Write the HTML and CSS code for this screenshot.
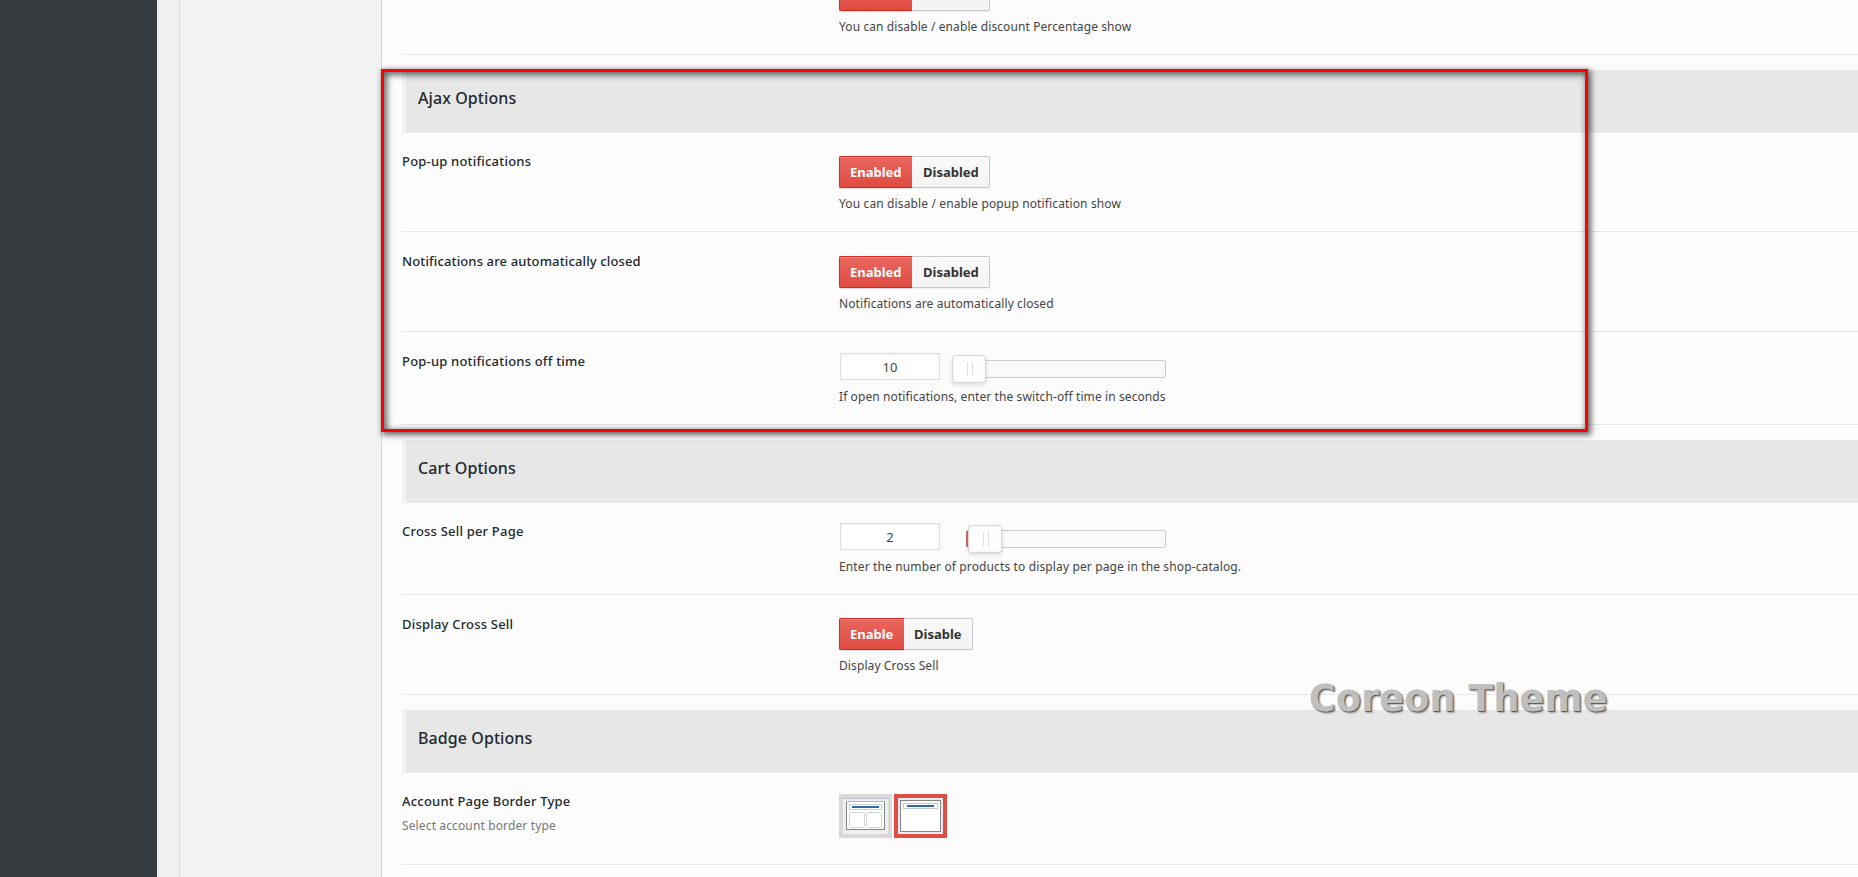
FILE: index.html
```
<!DOCTYPE html>
<html lang="en">
<head>
<meta charset="utf-8">
<title>Theme Options</title>
<link rel="stylesheet" href="styles.css">
</head>
<body>
<div class="page">
  <div class="admin-menu"></div>
  <div class="gutter"></div>
  <div class="options-menu"></div>
  <main class="content">
    <section class="row row-clipped">
      <div class="label-col"></div>
      <div class="field">
        <div class="switch"><span class="on"></span><span class="off"></span></div>
        <p class="desc">You can disable / enable discount Percentage show</p>
      </div>
    </section>

    <h3 class="section">Ajax Options</h3>
    <section class="row first h99">
      <div class="label-col"><div class="label">Pop-up notifications</div></div>
      <div class="field">
        <div class="switch"><span class="on">Enabled</span><span class="off">Disabled</span></div>
        <p class="desc loose">You can disable / enable popup notification show</p>
      </div>
    </section>
    <section class="row h100">
      <div class="label-col"><div class="label tight">Notifications are automatically closed</div></div>
      <div class="field">
        <div class="switch"><span class="on">Enabled</span><span class="off">Disabled</span></div>
        <p class="desc">Notifications are automatically closed</p>
      </div>
    </section>
    <section class="row h93">
      <div class="label-col"><div class="label">Pop-up notifications off time</div></div>
      <div class="field">
        <div class="slider-line">
          <div class="number">10</div>
          <div class="slider wide"><span class="handle"></span></div>
        </div>
        <p class="desc">If open notifications, enter the switch-off time in seconds</p>
      </div>
    </section>

    <h3 class="section">Cart Options</h3>
    <section class="row first h92">
      <div class="label-col"><div class="label">Cross Sell per Page</div></div>
      <div class="field">
        <div class="slider-line">
          <div class="number">2</div>
          <div class="slider filled"><span class="handle"></span></div>
        </div>
        <p class="desc loose">Enter the number of products to display per page in the shop-catalog.</p>
      </div>
    </section>
    <section class="row h100 cross">
      <div class="label-col"><div class="label">Display Cross Sell</div></div>
      <div class="field">
        <div class="switch short"><span class="on">Enable</span><span class="off">Disable</span></div>
        <p class="desc">Display Cross Sell</p>
      </div>
    </section>

    <h3 class="section">Badge Options</h3>
    <section class="row first h92">
      <div class="label-col">
        <div class="label">Account Page Border Type</div>
        <div class="sublabel">Select account border type</div>
      </div>
      <div class="field">
        <div class="choices">
          <div class="choice">
            <svg width="45" height="36" viewBox="0 0 45 36">
              <rect width="45" height="36" fill="#efefef"/>
              <rect width="45" height="1" y="0" fill="#c2c2d2"/>
              <rect x="3.5" y="3.5" width="38" height="28" fill="#fff" stroke="#858585"/>
              <rect x="3" y="3" width="39" height="1" fill="#b5b5b5"/>
              <rect x="6.5" y="6.5" width="32" height="5" fill="#fff" stroke="#d0d3d6"/>
              <rect x="9" y="8" width="27" height="2" fill="#2c6ca8"/>
              <rect x="6.5" y="14.5" width="15" height="15" rx="1" fill="#fff" stroke="#d2d5d7"/>
              <rect x="23.5" y="14.5" width="15" height="15" rx="1" fill="#fff" stroke="#d2d5d7"/>
            </svg>
          </div>
          <div class="choice selected">
            <svg width="45" height="36" viewBox="0 0 45 36">
              <rect width="45" height="36" fill="#e9edf0"/>
              <rect x="2.5" y="2.5" width="40" height="31" fill="#fff" stroke="#858585"/>
              <rect x="5.5" y="5.5" width="34" height="5" fill="#fff" stroke="#c6c8ca"/>
              <rect x="9" y="7" width="27" height="2" fill="#2c6ca8"/>
            </svg>
          </div>
        </div>
      </div>
    </section>
  </main>
  <div class="highlight"></div>
  <div class="watermark">Coreon Theme</div>
</div>
</body>
</html>
```
FILE: styles.css
```
* { box-sizing: border-box; }
body {
  margin: 0;
  font: 12px/20px "Noto Sans", "Open Sans", sans-serif;
  color: #444;
  overflow: hidden;
}
.page {
  position: relative;
  display: flex;
  width: 1858px;
  height: 877px;
  overflow: hidden;
  background: #fcfcfc;
}
.admin-menu { width: 157px; background: #363b3f; }
.gutter { width: 22px; background: #f0f0f0; }
.options-menu {
  width: 203px;
  background: #f3f3f3;
  border-left: 1px solid #dedede;
  border-right: 1px solid #d4d4d4;
}
.content { flex: 1; padding-left: 20px; }

.row {
  display: flex;
  border-bottom: 1px solid #e7e7e7;
  --top: 24px;
  --label-top: 19px;
}
.row.first { --top: 23px; --label-top: 18px; }
.row.cross { --top: 23px; }
.row-clipped { height: 55px; --top: 0px; }
.row-clipped .field { margin-top: -21px; }
.h92 { height: 92px; }
.h93 { height: 93px; }
.h99 { height: 99px; }
.h100 { height: 100px; }
.label-col { width: 437px; padding-top: var(--label-top); }
.field { padding-top: var(--top); }

.label {
  font-size: 13px;
  font-weight: 500;
  letter-spacing: .2px;
  color: #23282d;
  white-space: nowrap;
}
.label.tight { letter-spacing: .13px; }
.sublabel { margin-top: 5px; letter-spacing: .13px; color: #777; }
.desc { margin: 6px 0 0; letter-spacing: .1px; white-space: nowrap; }
.desc.loose { letter-spacing: .13px; }

.section {
  height: 63px;
  margin: 15px 0 0;
  padding: 18px 0 0 12px;
  background: #e7e7e7;
  border-left: 4px solid #f3f3f3;
  border-bottom: 1px solid #ebebeb;
  font-size: 16px;
  font-weight: 500;
  letter-spacing: .08px;
  color: #23282d;
}

.switch { display: flex; height: 32px; font-size: 13px; font-weight: 700; line-height: 30px; }
.switch span { border: 1px solid #c8c8c8; height: 32px; box-shadow: 0 1px 0 rgba(0,0,0,.05); }
.switch .on {
  width: 73px;
  padding-left: 10px;
  color: #fff;
  background: linear-gradient(#e9675f, #e04b41);
  border-color: #ce2d26;
  border-right: 0;
  border-radius: 2px 0 0 2px;
  box-shadow: inset 0 1px 0 rgba(255,255,255,.2), 0 1px 1px rgba(0,0,0,.15);
}
.switch .off {
  width: 78px;
  padding-left: 11px;
  color: #333;
  background: linear-gradient(#fafafa, #f3f3f3);
  border-left: 0;
  border-radius: 0 2px 2px 0;
}
.switch.short .on { width: 65px; }
.switch.short .off { width: 69px; padding-left: 10px; }

.slider-line { display: flex; width: 327px; height: 27px; margin-top: -3px; padding-left: 1px; }
.number {
  width: 100px;
  height: 27px;
  border: 1px solid #ddd;
  background: #fff;
  box-shadow: inset 0 1px 2px rgba(0,0,0,.07);
  font-size: 13px;
  line-height: 26px;
  text-align: center;
}
.slider {
  position: relative;
  width: 200px;
  height: 18px;
  margin: 7px 0 0 auto;
  border: 1px solid #ccc;
  border-right-color: #d4c6c6;
  border-radius: 3px;
  background: #fafafa;
}
.slider.wide { width: 213px; }
.slider.filled { border-left: 2px solid #cd6a65; }
.handle {
  position: absolute;
  top: -6px;
  left: -2px;
  width: 34px;
  height: 28px;
  border: 1px solid #d6d6d6;
  border-radius: 3px;
  background: #fff;
  box-shadow: inset 0 0 5px rgba(0,0,0,.05), 0 2px 4px rgba(0,0,0,.13);
}
.filled .handle { left: 0; }
.handle::after {
  content: "";
  position: absolute;
  left: 14px;
  top: 6px;
  width: 4px;
  height: 14px;
  border: solid #e0e0e0;
  border-width: 0 1px;
}

.row.h93 .desc, .row.h92 .desc { margin-top: 7px; }
.choices { display: flex; gap: 2px; margin-top: -2px; }
.choice { width: 53px; height: 44px; border: 4px solid #d9d9d9; }
.choice.selected { border-color: #e14d43; box-shadow: 0 4px 0 #faf8f8; }
.choice svg { display: block; }

.highlight {
  position: absolute;
  left: 381px;
  top: 69px;
  width: 1207px;
  height: 363px;
  border: 3px solid #f00;
  box-shadow: 2px 2px 6px 1px rgba(0,0,0,.6), inset 2px 2px 6px 1px rgba(0,0,0,.6);
}
.watermark {
  position: absolute;
  left: 1309px;
  top: 677px;
  font: bold 36.5px/44px "DejaVu Sans", sans-serif;
  letter-spacing: .15px;
  color: #bfbfbf;
  text-shadow: 1px 1px 1px #555, 2px 2px 2px rgba(0,0,0,.25);
  white-space: nowrap;
}
```
